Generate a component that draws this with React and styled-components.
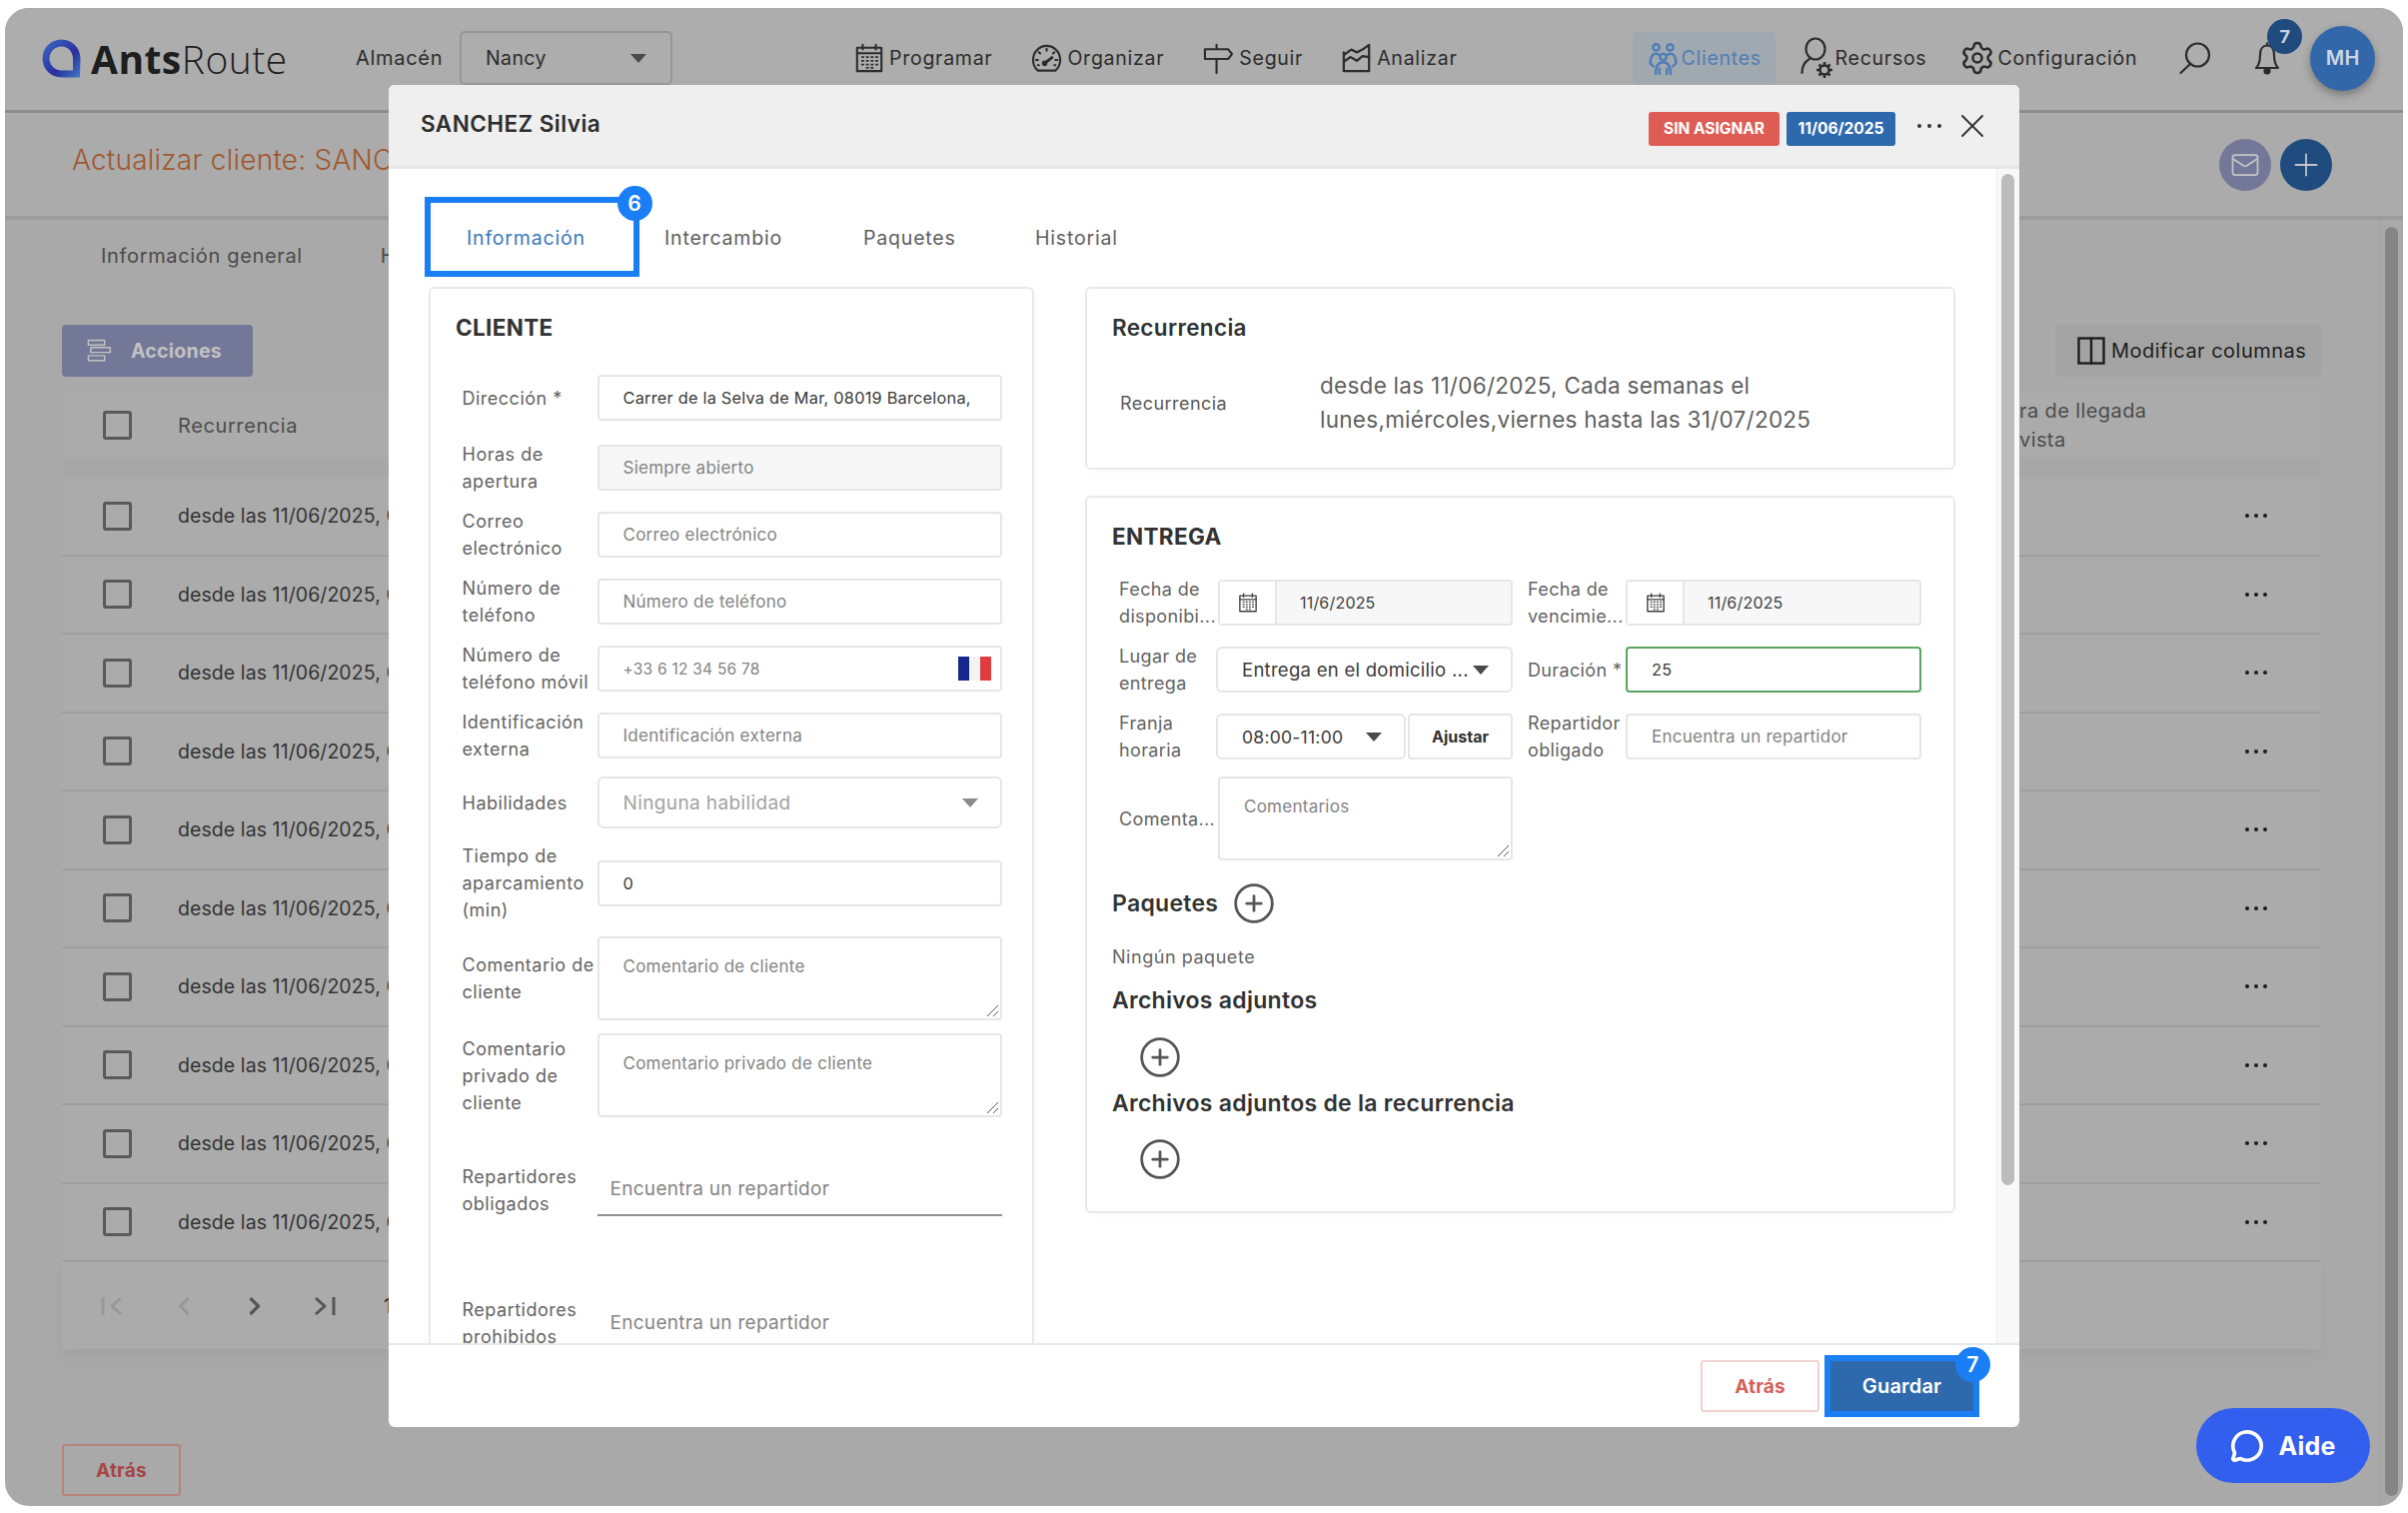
import React from 'react';
import styled, { createGlobalStyle } from 'styled-components';
import { Settings, CirclePlus, X, Mail, Plus, ChevronLeft, ChevronRight, MessageCircle } from 'lucide-react';

const Global = createGlobalStyle`
  html, body { margin: 0; padding: 0; background: #fff; }
  body { font-family: Inter, "Noto Sans", sans-serif; }
  * { box-sizing: border-box; }
`;

const Frame = styled.div`
  position: relative; margin: 8px 0 0 5px; width: 2400px; height: 1499px;
  background: #a9a9a9; border-radius: 24px; overflow: hidden; display: flex; flex-direction: column;
  color: #2c2c2c; letter-spacing: 0.015em;
`;
const TopBar = styled.header`
  height: 105px; flex: none; display: flex; align-items: center; padding: 0 0 2px 37px;
  background: #adadad; border-bottom: 3px solid #8d8d8d;
`;
const LogoBox = styled.div`display: flex; align-items: center; gap: 10px; width: 314px; flex: none;`;
const LogoText = styled.div`font-family: "Open Sans", sans-serif; font-size: 39px; letter-spacing: 0.012em; font-weight: 300; color: #1e1e1e; line-height: 1; b { font-weight: 700; }`;
const WarehouseLabel = styled.span`font-size: 20px; letter-spacing: 0.035em; color: #2c2c2c; width: 104px; flex: none;`;
const WarehouseSelect = styled.div`
  width: 213px; height: 54px; flex: none; border: 2px solid #969696; border-radius: 5px; display: flex; align-items: center;
  justify-content: space-between; padding: 0 24px; font-size: 19.5px; letter-spacing: 0.02em; color: #2c2c2c;
`;
const Caret = styled.i`
  display: block; width: 0; height: 0; flex: none; border-left: ${p => p.$w || 8}px solid transparent; border-right: ${p => p.$w || 8}px solid transparent;
  border-top: ${p => p.$h || 9}px solid ${p => p.$c || '#4a4a4a'};
`;
const NavGroup = styled.nav`display: flex; align-items: center; gap: ${p => p.$gap}px; margin-left: ${p => p.$ml}px; flex: none;`;
const NavItem = styled.a`
  display: flex; align-items: center; gap: ${p => p.$gap ?? 5}px; font-size: 19.5px; letter-spacing: 0.038em; color: ${p => p.$active ? '#4f7db6' : '#2c2c2c'};
  white-space: nowrap; height: 52px; flex: none; margin-left: ${p => p.$ml || 0}px; svg { flex: none; }
  ${p => p.$active && 'background: #a1a9b0; border-radius: 5px; padding-left: 13px; width: 143px;'}
`;
const IconBtn = styled.div`position: relative; flex: none; margin-left: ${p => p.$ml}px; display: flex;`;
const NotifBadge = styled.span`
  position: absolute; top: -22px; left: 13px; width: 35px; height: 35px; border-radius: 50%; background: #1f4b7f; color: #c8d2de;
  display: flex; align-items: center; justify-content: center; font-size: 18px; font-weight: 700;
`;
const Avatar = styled.div`
  width: 65px; height: 65px; margin-left: 30px; flex: none; border-radius: 50%; background: #3268aa; color: #ccd6e2; font-size: 20px; font-weight: 600;
  display: flex; align-items: center; justify-content: center; box-shadow: 0 4px 8px rgba(0,0,0,.3);
`;
const TitleBar = styled.div`
  height: 107px; flex: none; display: flex; align-items: center; justify-content: space-between; padding: 0 71px 0 67px;
  background: #ababab; border-bottom: 4px solid #9c9c9c;
`;
const PageTitle = styled.h1`margin: 0 0 9px; font-size: 28px; font-weight: 300; color: #a0582f; white-space: nowrap;`;
const RoundGroup = styled.div`display: flex; gap: 9px;`;
const RoundBtn = styled.div`
  width: 52px; height: 52px; border-radius: 50%; background: ${p => p.$bg}; color: #c4c4c8; display: flex; align-items: center; justify-content: center;
`;
const PageBody = styled.div`flex: 1; display: flex; min-height: 0;`;
const Content = styled.main`flex: 1; padding: 6px 58px 0 57px; min-width: 0;`;
const PageTrack = styled.div`flex: none; width: 24px; border-left: 1px solid #a0a0a0; padding: 7px 0 10px 5px;`;
const PageThumb = styled.div`width: 13px; height: 100%; background: #858585; border-radius: 7px;`;
const PageTabs = styled.div`display: flex; height: 60px; align-items: center; padding-left: 39px; gap: 78px; font-size: 20px; letter-spacing: 0.033em; color: #4a4a4a; white-space: nowrap;`;
const ToolRow = styled.div`display: flex; justify-content: space-between; margin-top: 39px;`;
const ActionBtn = styled.div`
  width: 191px; height: 52px; border-radius: 4px; background: #747898; color: #c2c2c2; font-size: 19.5px; font-weight: 700; display: flex; align-items: center; gap: 19px; padding-left: 24px;
`;
const ColumnsBtn = styled.div`
  width: 266px; height: 52px; border-radius: 4px; background: #a3a3a3; color: #1e1e1e; font-size: 20px; letter-spacing: 0.024em; display: flex; align-items: center; gap: 6px; padding-left: 22px; white-space: nowrap;
`;
const TableHead = styled.div`
  margin-top: 16px; height: 65px; background: #ababab; display: flex; align-items: center; justify-content: space-between; padding-left: 41px; color: #4d4d4d; font-size: 20px; letter-spacing: 0.03em;
`;
const HeadArrival = styled.div`width: 302px; line-height: 29px; white-space: nowrap; letter-spacing: 0.02em;`;
const TableGap = styled.div`height: 20px; background: #a7a7a7;`;
const TableRow = styled.div`
  height: 78.5px; background: #ababab; border-bottom: 2px solid #9e9e9e; display: flex; align-items: center; justify-content: space-between; padding: 0 54px 0 41px; font-size: 19.5px; letter-spacing: 0.004em; color: #333; white-space: nowrap;
`;
const CellLead = styled.div`display: flex; align-items: center;`;
const Check = styled.span`display: block; flex: none; width: 29px; height: 29px; border: 3.5px solid #595959; border-radius: 3px; margin-right: 46px;`;
const RowDots = styled.span`display: flex; gap: 5px; i { display: block; width: 4px; height: 4px; border-radius: 50%; background: #1c1c1c; }`;
const Pager = styled.div`height: 87px; background: #ababab; display: flex; align-items: center; padding-left: 38px; font-size: 19.5px; box-shadow: 0 8px 12px rgba(0,0,0,.04);`;
const PagerItem = styled.span`display: flex; width: ${p => p.$w}px; color: ${p => p.$off ? '#989898' : '#555'};`;
const PageBack = styled.div`
  margin-top: 95px; width: 119px; height: 52px; border: 2px solid #b7817c; border-radius: 3px; color: #a44743; font-weight: 700; font-size: 19px; display: flex; align-items: center; justify-content: center;
`;

const Modal = styled.section`
  position: absolute; left: 384px; top: 77px; width: 1632px; height: 1343px; background: #fff; border-radius: 6px; display: flex; flex-direction: column; overflow: hidden; color: #4a4a4a; letter-spacing: 0.012em;
`;
const ModalHead = styled.div`
  height: 84px; flex: none; background: #efefef; border-bottom: 3px solid #e6e6e6; display: flex; align-items: center; padding: 0 27px 0 32px; justify-content: space-between;
`;
const ModalTitle = styled.h2`margin: -4px 0 0; font-size: 22.5px; font-weight: 600; letter-spacing: 0.02em; color: #2d2d2d;`;
const HeadRight = styled.div`display: flex; align-items: center; margin-top: 6px;`;
const Tag = styled.span`
  height: 34px; border-radius: 3px; padding: 0; width: ${p => p.$w}px; margin-right: ${p => p.$mr}px; background: ${p => p.$bg}; color: #fff; font-size: 15.5px; font-weight: 700; letter-spacing: 0; display: flex; align-items: center; justify-content: center;
`;
const HeadDots = styled.span`display: flex; gap: 6px; margin: -6px 11px 0 22px; i { display: block; width: 4px; height: 4px; border-radius: 50%; background: #333; }`;
const CloseIcon = styled(X)`margin-top: -6px; color: #333;`;
const ModalBody = styled.div`flex: 1; display: flex; min-height: 0;`;
const ModalMain = styled.div`flex: 1; padding: 28px 0 0 36px; overflow: hidden;`;
const ModalTrack = styled.div`flex: none; width: 23px; background: #f8f8f8; border-left: 1px solid #eee; padding: 5px 4px;`;
const ModalThumb = styled.div`width: 13px; height: 1012px; background: #bcbcbc; border-radius: 7px;`;
const ModalFoot = styled.div`
  height: 84px; flex: none; border-top: 2px solid #e8e8e8; display: flex; align-items: center; justify-content: flex-end; padding: 0 40px 0 0; gap: 5px;
`;
const BackBtn = styled.div`
  width: 119px; height: 52px; border: 2px solid #f2d2cf; border-radius: 3px; color: #d5605a; font-size: 19px; font-weight: 700; display: flex; align-items: center; justify-content: center;
`;
const HighlightBox = styled.div`position: relative; border: 6px solid #1a7ef5; flex: none;`;
const SaveBtn = styled.div`
  width: 143px; height: 50px; background: #2f69ad; color: #fff; font-size: 20px; font-weight: 600; display: flex; align-items: center; justify-content: center;
`;
const StepBadge = styled.span`
  position: absolute; top: ${p => p.$top}px; right: ${p => p.$right}px; width: 35px; height: 35px; border-radius: 50%; background: #1a7ef5; color: #fff; font-size: 21px; font-weight: 600; display: flex; align-items: center; justify-content: center;
`;
const TabsBar = styled.div`display: flex; align-items: center; height: 80px; padding-top: 1px; font-size: 19.5px; letter-spacing: 0.042em; color: #5e5e5e; white-space: nowrap;`;
const ActiveTab = styled(HighlightBox)`width: 215px; height: 80px; margin-top: -1px; color: #3a78bd; display: flex; align-items: center; padding: 2px 0 0 36px; margin-right: 25px;`;
const TabItem = styled.div`width: ${p => p.$w}px; flex: none;`;
const Columns = styled.div`display: flex; gap: 51px; margin: 10px 0 0 4px; align-items: flex-start;`;
const Card = styled.div`
  background: #fff; border: 2px solid #e9e9e9; border-radius: 6px; box-shadow: 0 0 16px rgba(0,0,0,.025); padding: ${p => p.$pt || 24}px 25px 0;
  ${p => p.$h && `height: ${p.$h}px;`}
`;
const CardClient = styled(Card)`width: 606px; flex: none; height: 1100px;`;
const Stack = styled.div`display: flex; flex-direction: column; gap: 26px; width: 871px; flex: none;`;
const Heading = styled.h3`margin: 0; font-size: 22.5px; line-height: 30px; font-weight: 700; color: #333; letter-spacing: 0.015em;`;
const RecHeading = styled(Heading)`font-weight: 600;`;
const SubHeading = styled.h4`margin: ${p => p.$mt || 0}px 0 0; font-size: 23px; line-height: 30px; font-weight: 600; color: #333; letter-spacing: 0.012em; display: flex; align-items: center; gap: 14px;`;
const RecRow = styled.div`display: flex; align-items: center; margin: 26px 0 0 8px;`;
const RecLabel = styled.span`font-size: 18px; letter-spacing: 0.025em; width: 200px; flex: none; color: #5a5a5a;`;
const RecText = styled.p`margin: 0; font-size: 22.5px; line-height: 34px; color: #5f5f5f; letter-spacing: 0.012em; white-space: nowrap;`;
const FormStack = styled.div`display: flex; flex-direction: column; gap: 13px; margin: 28px 0 0 6.5px;`;
const FormRow = styled.div`
  display: grid; grid-template-columns: 135px 405px; align-items: center; min-height: 54px; margin-top: ${p => p.$mt || 0}px;
`;
const FieldLabel = styled.label`font-size: 18px; letter-spacing: 0.028em; line-height: 27px; color: #646464; white-space: nowrap;`;
const Field = styled.div`
  position: relative; height: ${p => p.$h || 46}px; border: 2px solid #e6e6e6; border-radius: 4px; background: ${p => p.$bg || '#fff'}; display: flex; align-items: center; padding-left: 24px;
  font-size: ${p => p.$size || (p.$dark ? 16.3 : 17)}px; letter-spacing: 0.015em; color: ${p => p.$dark ? '#3a3a3a' : '#848484'}; white-space: nowrap; overflow: hidden;
  ${p => p.$area && 'align-items: flex-start; padding-top: 18px;'}
  ${p => p.$ok && 'border-color: #5aa55f;'}
  ${p => p.$round && 'border-radius: 6px; justify-content: space-between; padding-right: 22px;'}
`;
const SkillField = styled(Field)`color: #a2a2a2; letter-spacing: 0.02em;`;
const SlotField = styled(Field)`flex: 1;`;
const Flag = styled.svg`position: absolute; right: 9px; top: 9px;`;
const Grip = styled.svg`position: absolute; right: 1px; bottom: 1px;`;
const UnderField = styled.div`
  height: 52px; border-bottom: 2px solid #8f8f8f; display: flex; align-items: center; padding: 0 0 2px 13px; font-size: 19px; letter-spacing: 0.015em; color: #858585; white-space: nowrap; ${p => p.$plain && 'border-bottom: none;'}
`;
const DeliveryGrid = styled.div`
  display: grid; grid-template-columns: 100px 295px 14px 99px 296px; row-gap: 13px; margin: 24px 0 0 6px; align-items: center; grid-auto-rows: minmax(54px, auto);
`;
const SmallLabel = styled.label`font-size: 18px; letter-spacing: 0.02em; line-height: 27px; color: #646464; white-space: nowrap; padding-left: 1px; grid-column: ${p => p.$col};`;
const DateGroup = styled.div`
  grid-column: ${p => p.$col}; height: 46px; border: 2px solid #e6e6e6; border-radius: 4px; background: #f7f7f7; display: flex; align-items: center; font-size: 16px; color: #3f3f3f;
`;
const Addon = styled.span`width: 57px; height: 100%; background: #fff; border-right: 2px solid #e6e6e6; display: flex; align-items: center; justify-content: center; margin-right: 23px; flex: none;`;
const PlaceField = styled(Field)`grid-column: ${p => p.$col}; margin-left: ${p => p.$ml || 0}px;`;
const SlotPair = styled.div`grid-column: 2; display: flex; gap: 2px; margin-left: -2px;`;
const AdjustBtn = styled.div`width: 105px; height: 46px; flex: none; border: 2px solid #e6e6e6; border-radius: 4px; font-size: 16px; font-weight: 700; color: #333; display: flex; align-items: center; justify-content: center; letter-spacing: 0;`;
const NoneText = styled.p`margin: 19.5px 0 0; font-size: 18px; letter-spacing: 0.03em; line-height: 24px; color: #666;`;
const PlusWrap = styled.div`display: flex; margin: ${p => p.$m}; color: #555;`;
const HelpBtn = styled.div`
  position: absolute; left: 2193px; top: 1401px; width: 174px; height: 75px; border-radius: 38px; background: #335fee; color: #fff; font-size: 25px; font-weight: 700; display: flex; align-items: center; justify-content: center; gap: 14px; letter-spacing: 0.01em;
`;

const Ink = ({ size = 32, vb = '0 0 32 32', children, sw = 2 }) => (
  <svg width={size} height={size} viewBox={vb} fill="none" stroke="currentColor" strokeWidth={sw} strokeLinecap="round" strokeLinejoin="round">{children}</svg>
);
const CalendarIcon = ({ size = 30 }) => (
  <Ink size={size} sw={2.200}>
    <rect x="3" y="5" width="26" height="25" />
    <path d="M3 11h26M9 2v5M23 2v5" />
    <path d="M8.5 15h1M13.5 15h1M18.5 15h1M23.5 15h1M8.5 19h1M13.5 19h1M18.5 19h1M23.5 19h1M8.5 23h1M13.5 23h1M18.5 23h1M23.5 23h1M13.5 26.5h1M18.5 26.5h1" strokeWidth="2" strokeLinecap="square" />
  </Ink>
);
const GaugeIcon = () => (
  <Ink size={31} sw={2.200}>
    <path d="M7 28.5h18c3-2.500 5-6.500 5-11C30 9.500 23.800 3 16 3S2 9.500 2 17.500c0 4.500 2 8.500 5 11z" />
    <path d="M16 6v2M8 9.500l1.400 1.400M24 9.500l-1.400 1.400M5 17.500h2M25 17.500h2M7 23h1M24 23h1" />
    <path d="M14.500 20.500l7-5.500" strokeWidth="3" />
    <circle cx="14" cy="21" r="1.800" fill="currentColor" />
  </Ink>
);
const SignIcon = () => (
  <Ink size={31} sw={2.200}>
    <path d="M2 6.500h24l4 5-4 5H2z" />
    <path d="M14 2v4M14 16.500V31" />
  </Ink>
);
const ChartIcon = () => (
  <Ink size={30} sw={2.400}>
    <path d="M2 10v20h27V2l-7 5-6 3-6-3-8 6" />
    <path d="M2 20l7-5 7 4 6-5 7 1" />
  </Ink>
);
const PeopleIcon = () => (
  <Ink size={34} sw={2.300}>
    <circle cx="10" cy="6" r="3" /><circle cx="23" cy="6" r="3" /><circle cx="16.500" cy="15" r="3" />
    <path d="M4.500 21c0-6 2-9 5-9 1.500 0 2.500.5 3 1M28.500 21c0-6-2-9-5-9-1.500 0-2.500.5-3 1" />
    <path d="M9.500 31c0-7 2.500-11 7-11s7 4 7 11M4.500 21l3 3M28.500 21l-3 3M13 26v5M20 26v5" />
  </Ink>
);
const ResourceIcon = () => (
  <svg width="33" height="48" viewBox="0 0 33 48" fill="none" stroke="currentColor" strokeWidth="2.200">
    <ellipse cx="15" cy="15" rx="9.500" ry="10.500" />
    <path d="M1.500 39c0-6.500 3-11.500 7.500-14" strokeLinecap="round" />
    <g strokeWidth="2.600"><circle cx="24" cy="36" r="4.500" /><path d="M24 28v3M24 41v3M16 36h3M29 36h3M18.500 30.500l2 2M27.500 39.500l2 2M18.500 41.500l2-2M27.500 32.500l2-2" /></g>
  </svg>
);
const SearchIcon = () => (
  <Ink size={32} sw={2.200}>
    <circle cx="18.500" cy="13" r="11.500" />
    <path d="M11 22L1.500 31" />
  </Ink>
);
const BellIcon = () => (
  <svg width="26" height="34" viewBox="0 0 26 34" fill="none" stroke="currentColor" strokeWidth="2.200" strokeLinejoin="round">
    <path d="M2 27c3-3 4-6 4-13 0-6 3-9.500 7-9.500s7 3.500 7 9.500c0 7 1 10 4 13z" />
    <path d="M13 1.500v3" />
    <circle cx="13" cy="30" r="2.500" fill="currentColor" />
  </svg>
);
const ActionsIcon = () => (
  <Ink size={26} sw={1.800}>
    <rect x="3" y="3" width="20" height="6" /><rect x="6" y="12" width="24" height="6" /><rect x="3" y="22" width="20" height="6" />
  </Ink>
);
const ColumnsIcon = () => (
  <Ink size={28} vb="0 0 28 28" sw={2.400}>
    <rect x="1.500" y="1.500" width="25" height="25" strokeLinecap="butt" strokeLinejoin="miter" />
    <path d="M14 1.500v25" />
  </Ink>
);
const FirstIcon = () => (
  <svg width="24" height="24" viewBox="0 0 24 24" fill="none" stroke="currentColor" strokeWidth="3"><path d="M3 3v18" /><path d="M21 4l-9 8 9 8" strokeLinejoin="round" /></svg>
);
const LastIcon = () => (
  <svg width="24" height="24" viewBox="0 0 24 24" fill="none" stroke="currentColor" strokeWidth="3"><path d="M21 3v18" /><path d="M3 4l9 8-9 8" strokeLinejoin="round" /></svg>
);
const ResizeGrip = () => (
  <Grip width="13" height="13" viewBox="0 0 13 13" stroke="#555" strokeWidth="1"><path d="M1 12L12 1M7 12l5-5" /></Grip>
);
const Logo = () => (
  <svg width="39" height="39" viewBox="0 0 39 39">
    <defs>
      <linearGradient id="lg" x1="0" y1="0" x2="1" y2="1">
        <stop offset="0" stopColor="#3b6fc4" /><stop offset=".6" stopColor="#2b2fa0" /><stop offset="1" stopColor="#3f7ac8" />
      </linearGradient>
    </defs>
    <path fillRule="evenodd" fill="url(#lg)" d="M38 38.500H19.500C9 38.500 .5 30 .5 19.500S9 .5 19.500 .5 38.500 9 38.500 19.500zM19.500 7.500C13 7.500 7.500 13 7.500 19.500S13 31.500 19.500 31.500c3 0 8 0 11.500 0 0-4 0-9 0-12C31 13 26 7.500 19.500 7.500z" />
  </svg>
);

const rows = Array.from({ length: 10 });

export default function App() {
  return (
    <Frame>
      <Global />
      <TopBar>
        <LogoBox>
          <Logo />
          <LogoText><b>Ants</b>Route</LogoText>
        </LogoBox>
        <WarehouseLabel>Almacén</WarehouseLabel>
        <WarehouseSelect>Nancy<Caret /></WarehouseSelect>
        <NavGroup $ml={182} $gap={39}>
          <NavItem><CalendarIcon />Programar</NavItem>
          <NavItem><GaugeIcon />Organizar</NavItem>
          <NavItem><SignIcon />Seguir</NavItem>
          <NavItem><ChartIcon />Analizar</NavItem>
        </NavGroup>
        <NavGroup $ml={175} $gap={25}>
          <NavItem $active $gap={2}><PeopleIcon />Clientes</NavItem>
          <NavItem $gap={2}><ResourceIcon />Recursos</NavItem>
          <NavItem $ml={8} $gap={2}><Settings size={36} strokeWidth={1.700} />Configuración</NavItem>
        </NavGroup>
        <IconBtn $ml={42}><SearchIcon /></IconBtn>
        <IconBtn $ml={43}><BellIcon /><NotifBadge>7</NotifBadge></IconBtn>
        <Avatar>MH</Avatar>
      </TopBar>
      <TitleBar>
        <PageTitle>Actualizar cliente: SANC</PageTitle>
        <RoundGroup>
          <RoundBtn $bg="#747898"><Mail size={30} strokeWidth={1.400} /></RoundBtn>
          <RoundBtn $bg="#1f4b7f"><Plus size={36} strokeWidth={1.200} /></RoundBtn>
        </RoundGroup>
      </TitleBar>
      <PageBody>
        <Content>
          <PageTabs><span>Información general</span><span>H</span></PageTabs>
          <ToolRow>
            <ActionBtn><ActionsIcon />Acciones</ActionBtn>
            <ColumnsBtn><ColumnsIcon />Modificar columnas</ColumnsBtn>
          </ToolRow>
          <TableHead>
            <CellLead><Check />Recurrencia</CellLead>
            <HeadArrival>ra de llegada<br />vista</HeadArrival>
          </TableHead>
          <TableGap />
          {rows.map((_, i) => (
            <TableRow key={i}>
              <CellLead><Check />desde las 11/06/2025, C</CellLead>
              <RowDots><i /><i /><i /></RowDots>
            </TableRow>
          ))}
          <Pager>
            <PagerItem $w={70} $off><FirstIcon /></PagerItem>
            <PagerItem $w={71} $off><ChevronLeft size={28} strokeWidth={2.800} /></PagerItem>
            <PagerItem $w={72}><ChevronRight size={28} strokeWidth={2.800} /></PagerItem>
            <PagerItem $w={71}><LastIcon /></PagerItem>
            <span>1</span>
          </Pager>
          <PageBack>Atrás</PageBack>
        </Content>
        <PageTrack><PageThumb /></PageTrack>
      </PageBody>

      <Modal>
        <ModalHead>
          <ModalTitle>SANCHEZ Silvia</ModalTitle>
          <HeadRight>
            <Tag $w={131} $mr={7} $bg="#dd5d55">SIN ASIGNAR</Tag>
            <Tag $w={109} $mr={0} $bg="#2f69ad">11/06/2025</Tag>
            <HeadDots><i /><i /><i /></HeadDots>
            <CloseIcon size={40} strokeWidth={1.200} />
          </HeadRight>
        </ModalHead>
        <ModalBody>
          <ModalMain>
            <TabsBar>
              <ActiveTab>Información<StepBadge $top={-17} $right={-19}>6</StepBadge></ActiveTab>
              <TabItem $w={199}>Intercambio</TabItem>
              <TabItem $w={172}>Paquetes</TabItem>
              <TabItem $w={120}>Historial</TabItem>
            </TabsBar>
            <Columns>
              <CardClient>
                <Heading>CLIENTE</Heading>
                <FormStack>
                  <FormRow><FieldLabel>Dirección *</FieldLabel><Field $dark>Carrer de la Selva de Mar, 08019 Barcelona,</Field></FormRow>
                  <FormRow $mt={3}><FieldLabel>Horas de<br />apertura</FieldLabel><Field $bg="#f7f7f7">Siempre abierto</Field></FormRow>
                  <FormRow><FieldLabel>Correo<br />electrónico</FieldLabel><Field>Correo electrónico</Field></FormRow>
                  <FormRow><FieldLabel>Número de<br />teléfono</FieldLabel><Field>Número de teléfono</Field></FormRow>
                  <FormRow><FieldLabel>Número de<br />teléfono móvil</FieldLabel>
                    <Field $size={15.500}>+33 6 12 34 56 78
                      <Flag width="33" height="24" viewBox="0 0 33 24"><rect width="11" height="24" fill="#14278a" /><rect x="11" width="11" height="24" fill="#f3f3f3" /><rect x="22" width="11" height="24" fill="#e03c40" /></Flag>
                    </Field>
                  </FormRow>
                  <FormRow><FieldLabel>Identificación<br />externa</FieldLabel><Field>Identificación externa</Field></FormRow>
                  <FormRow><FieldLabel>Habilidades</FieldLabel><SkillField $h={52} $round $size={19}>Ninguna habilidad<Caret $c="#8a8a8a" /></SkillField></FormRow>
                  <FormRow><FieldLabel>Tiempo de<br />aparcamiento<br />(min)</FieldLabel><Field $dark>0</Field></FormRow>
                  <FormRow><FieldLabel>Comentario de<br />cliente</FieldLabel><Field $h={84} $area>Comentario de cliente<ResizeGrip /></Field></FormRow>
                  <FormRow><FieldLabel>Comentario<br />privado de<br />cliente</FieldLabel><Field $h={84} $area>Comentario privado de cliente<ResizeGrip /></Field></FormRow>
                  <FormRow $mt={33}><FieldLabel>Repartidores<br />obligados</FieldLabel><UnderField>Encuentra un repartidor</UnderField></FormRow>
                  <FormRow $mt={66}><FieldLabel>Repartidores<br />prohibidos</FieldLabel><UnderField $plain>Encuentra un repartidor</UnderField></FormRow>
                </FormStack>
              </CardClient>
              <Stack>
                <Card $h={183}>
                  <RecHeading>Recurrencia</RecHeading>
                  <RecRow>
                    <RecLabel>Recurrencia</RecLabel>
                    <RecText>desde las 11/06/2025, Cada semanas el<br />lunes,miércoles,viernes hasta las 31/07/2025</RecText>
                  </RecRow>
                </Card>
                <Card $h={718} $pt={24}>
                  <Heading>ENTREGA</Heading>
                  <DeliveryGrid>
                    <SmallLabel $col={1}>Fecha de<br />disponibi...</SmallLabel>
                    <DateGroup $col={2}><Addon><CalendarIcon size={20} /></Addon>11/6/2025</DateGroup>
                    <SmallLabel $col={4}>Fecha de<br />vencimie...</SmallLabel>
                    <DateGroup $col={5}><Addon><CalendarIcon size={20} /></Addon>11/6/2025</DateGroup>

                    <SmallLabel $col={1}>Lugar de<br />entrega</SmallLabel>
                    <PlaceField $col={2} $ml={-2} $round $dark $size={18.500}>Entrega en el domicilio ...<Caret /></PlaceField>
                    <SmallLabel $col={4}>Duración *</SmallLabel>
                    <PlaceField $col={5} $ok $dark>25</PlaceField>

                    <SmallLabel $col={1}>Franja<br />horaria</SmallLabel>
                    <SlotPair>
                      <SlotField $round $dark $size={17.500}>08:00-11:00<Caret /></SlotField>
                      <AdjustBtn>Ajustar</AdjustBtn>
                    </SlotPair>
                    <SmallLabel $col={4}>Repartidor<br />obligado</SmallLabel>
                    <PlaceField $col={5}>Encuentra un repartidor</PlaceField>

                    <SmallLabel $col={1}>Comenta...</SmallLabel>
                    <PlaceField $col={2} $h={84} $area>Comentarios<ResizeGrip /></PlaceField>
                  </DeliveryGrid>
                  <SubHeading $mt={21}>Paquetes<CirclePlus size={44} strokeWidth={1.500} color="#555" /></SubHeading>
                  <NoneText>Ningún paquete</NoneText>
                  <SubHeading $mt={16}>Archivos adjuntos</SubHeading>
                  <PlusWrap $m="20px 0 0 26px"><CirclePlus size={44} strokeWidth={1.500} /></PlusWrap>
                  <SubHeading $mt={9}>Archivos adjuntos de la recurrencia</SubHeading>
                  <PlusWrap $m="19px 0 0 26px"><CirclePlus size={44} strokeWidth={1.500} /></PlusWrap>
                </Card>
              </Stack>
            </Columns>
          </ModalMain>
          <ModalTrack><ModalThumb /></ModalTrack>
        </ModalBody>
        <ModalFoot>
          <BackBtn>Atrás</BackBtn>
          <HighlightBox><SaveBtn>Guardar</SaveBtn><StepBadge $top={-14} $right={-17}>7</StepBadge></HighlightBox>
        </ModalFoot>
      </Modal>
      <HelpBtn><MessageCircle size={34} strokeWidth={2.600} />Aide</HelpBtn>
    </Frame>
  );
}
